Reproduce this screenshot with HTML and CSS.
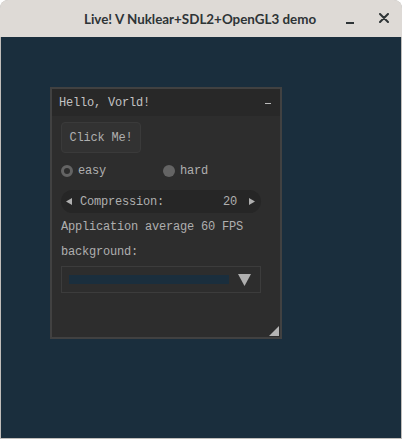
FILE: index.html
```html
<!DOCTYPE html>
<html>
<head>
<meta charset="utf-8">
<link rel="stylesheet" href="styles.css">
</head>
<body>
<div class="app">
  <div class="titlebar">
    <div class="title">Live! V Nuklear+SDL2+OpenGL3 demo</div>
    <span class="tb-min"></span>
    <svg class="tb-close" width="10" height="10" viewBox="0 0 10 10"><path d="M1 1L9 9M9 1L1 9" stroke="#2e3436" stroke-width="2" stroke-linecap="round"/></svg>
  </div>
  <div class="canvas">
    <div class="panel">
      <div class="panel-header">
        <span class="panel-title">Hello, Vorld!</span>
        <span class="panel-min"></span>
      </div>
      <div class="panel-body">
        <div class="btn">Click Me!</div>
        <div class="radios">
          <div class="opt"><span class="radio active"></span><span>easy</span></div>
          <div class="opt"><span class="radio"></span><span>hard</span></div>
        </div>
        <div class="property">
          <svg class="arrow" width="6" height="7" viewBox="0 0 6 7"><path d="M6 0L0 3.5L6 7Z" fill="#afafaf"/></svg>
          <span class="prop-label">Compression:</span>
          <span class="prop-value">20</span>
          <svg class="arrow" width="6" height="7" viewBox="0 0 6 7"><path d="M0 0L6 3.5L0 7Z" fill="#afafaf"/></svg>
        </div>
        <div class="label row-app">Application average 60 FPS</div>
        <div class="label row-bg">background:</div>
        <div class="combo">
          <div class="swatch"></div>
          <svg class="combo-arrow" width="13" height="12" viewBox="0 0 13 12"><path d="M0 0H13L6.5 12Z" fill="#afafaf"/></svg>
        </div>
      </div>
      <svg class="scaler" width="10" height="10" viewBox="0 0 10 10"><path d="M10 0V10H0Z" fill="#b4b4b4"/></svg>
    </div>
  </div>
</div>
</body>
</html>
```

FILE: styles.css
```css
html, body {
  margin: 0;
  padding: 0;
  background: #ffffff;
}
.app {
  width: 402px;
  height: 439px;
  display: flex;
  flex-direction: column;
  box-sizing: border-box;
  background: #c0bdba;
  border-radius: 8px 8px 0 0;
  overflow: hidden;
}
.titlebar {
  height: 37px;
  flex: none;
  background: #dedad6;
  border-radius: 8px 8px 0 0;
  display: flex;
  align-items: center;
  font-family: Lato, "Noto Sans", sans-serif;
  font-weight: 700;
  font-size: 13.4px;
  color: #2e3436;
}
.title {
  margin-left: 84px;
  width: 262px;
  flex: none;
  white-space: nowrap;
  overflow: hidden;
  margin-top: 1px;
}
.tb-min {
  display: block;
  flex: none;
  width: 8px;
  height: 2px;
  background: #2e3436;
  margin-top: 8px;
}
.tb-close {
  display: block;
  flex: none;
  margin-left: 25px;
  margin-top: -2px;
}
.canvas {
  flex: 1;
  margin: 0 1px 1px 1px;
  background: #1a2e3d;
  padding: 50px 0 0 49px;
}
.panel {
  position: relative;
  width: 232px;
  height: 252px;
  box-sizing: border-box;
  border: 2px solid #414141;
  background: #2d2d2d;
  font-family: "Liberation Mono", "DejaVu Sans Mono", monospace;
  font-size: 12px;
  letter-spacing: -0.2px;
  color: #afafaf;
}
.panel-header {
  height: 27px;
  background: #282828;
  display: flex;
  align-items: center;
  justify-content: space-between;
  padding: 0 9px 0 7px;
  color: #c3c3c3;
}
.panel-min {
  display: block;
  width: 6px;
  height: 1px;
  background: #bcbcbc;
  margin-top: 1px;
}
.panel-body {
  padding: 6px 0 0 9px;
}
.btn {
  width: 80px;
  height: 31px;
  box-sizing: border-box;
  border: 1px solid #3a3a3a;
  border-radius: 4px;
  background: #323232;
  display: flex;
  align-items: center;
  justify-content: center;
}
.radios {
  margin-top: 6px;
  height: 24px;
  width: 200px;
  display: grid;
  grid-template-columns: 102px 1fr;
  align-items: center;
}
.opt {
  display: flex;
  align-items: center;
}
.radio {
  width: 12px;
  height: 12px;
  border-radius: 50%;
  background: #646464;
  margin-right: 5px;
  box-sizing: border-box;
}
.radio.active {
  border: 3px solid #646464;
  background: #2d2d2d;
}
.property {
  margin-top: 7px;
  width: 200px;
  height: 23px;
  box-sizing: border-box;
  border-radius: 12px;
  background: #262626;
  display: flex;
  align-items: center;
  padding: 0 6px 0 5px;
}
.prop-label {
  margin-left: 8px;
  flex: 1;
}
.prop-value {
  margin-right: 12px;
}
.label {
  height: 24px;
  display: flex;
  align-items: center;
}
.row-app {
  margin-top: 2px;
}
.row-bg {
  margin-top: 1px;
}
.combo {
  margin-top: 2px;
  width: 200px;
  height: 27px;
  box-sizing: border-box;
  border: 1px solid #3c3c3c;
  background: #2d2d2d;
  display: flex;
  align-items: center;
  padding: 0 9px 0 7px;
}
.swatch {
  width: 160px;
  height: 9px;
  background: #1a2e3d;
}
.combo-arrow {
  display: block;
  margin-left: auto;
}
.scaler {
  position: absolute;
  right: 1px;
  bottom: 1px;
  display: block;
}
```
